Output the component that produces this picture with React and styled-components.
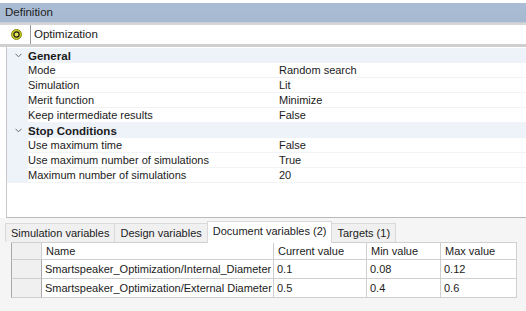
import React from 'react'
import styled, { createGlobalStyle } from 'styled-components'

const GlobalStyle = createGlobalStyle`
  html, body { margin: 0; padding: 0; background: #ffffff; }
  body { font-family: "Liberation Sans", Arial, sans-serif; font-size: 11px; color: #1b1b1b; }
`

const SECTIONS = [
  {
    title: 'General',
    props: [
      ['Mode', 'Random search'],
      ['Simulation', 'Lit'],
      ['Merit function', 'Minimize'],
      ['Keep intermediate results', 'False'],
    ],
  },
  {
    title: 'Stop Conditions',
    props: [
      ['Use maximum time', 'False'],
      ['Use maximum number of simulations', 'True'],
      ['Maximum number of simulations', '20'],
    ],
  },
]

const TABS = [
  { label: 'Simulation variables' },
  { label: 'Design variables' },
  { label: 'Document variables (2)', active: true },
  { label: 'Targets (1)' },
]

const COLUMNS = [
  { label: '', width: 31 },
  { label: 'Name', width: 232 },
  { label: 'Current value', width: 93 },
  { label: 'Min value', width: 74 },
  { label: 'Max value', width: 76 },
]

const VARIABLES = [
  ['Smartspeaker_Optimization/Internal_Diameter', '0.1', '0.08', '0.12'],
  ['Smartspeaker_Optimization/External Diameter', '0.5', '0.4', '0.6'],
]

export default function App() {
  return (
    <>
      <GlobalStyle />
      <Panel>
        <TitleBar>Definition</TitleBar>
        <NameRow>
          <TargetIcon />
          <NameInput>Optimization</NameInput>
        </NameRow>
        <PropertyGrid>
          {SECTIONS.map((section) => (
            <React.Fragment key={section.title}>
              <CategoryRow>
                <Gutter>
                  <Chevron />
                </Gutter>
                <CategoryTitle>{section.title}</CategoryTitle>
              </CategoryRow>
              {section.props.map(([name, value]) => (
                <PropRow key={name}>
                  <Gutter />
                  <PropName>{name}</PropName>
                  <PropValue>{value}</PropValue>
                </PropRow>
              ))}
            </React.Fragment>
          ))}
        </PropertyGrid>
        <BottomPanel>
          <TabStrip>
            {TABS.map((tab) => (
              <Tab key={tab.label} $active={tab.active}>{tab.label}</Tab>
            ))}
          </TabStrip>
          <Table>
            <HeaderRow>
              {COLUMNS.map((col, i) => (
                <HeaderCell key={i} $width={col.width} $corner={i === 0}>{col.label}</HeaderCell>
              ))}
            </HeaderRow>
            {VARIABLES.map((row) => (
              <DataRow key={row[0]}>
                <RowHeader $width={COLUMNS[0].width} />
                {row.map((cell, i) => (
                  <Cell key={i} $width={COLUMNS[i + 1].width}>{cell}</Cell>
                ))}
              </DataRow>
            ))}
          </Table>
        </BottomPanel>
      </Panel>
    </>
  )
}

function TargetIcon() {
  return (
    <IconBox>
      <svg width="11" height="11" viewBox="0 0 11 11">
        <circle cx="5.5" cy="5.5" r="5" fill="#c9c92a" stroke="#8a8a10" strokeWidth="1" />
        <circle cx="5.5" cy="5.5" r="2.6" fill="#e4e45a" stroke="#1a1a1a" strokeWidth="1.2" />
      </svg>
    </IconBox>
  )
}

function Chevron() {
  return (
    <svg width="7" height="5" viewBox="0 0 7 5">
      <path d="M0.5 0.8 L3.5 3.8 L6.5 0.8" fill="none" stroke="#666" strokeWidth="1" />
    </svg>
  )
}

const Panel = styled.div`
  width: 526px;
  height: 311px;
  display: flex;
  flex-direction: column;
  background: #ffffff;
  overflow: hidden;
`

const TitleBar = styled.div`
  margin-top: 3px;
  height: 19px;
  line-height: 19px;
  padding-left: 5px;
  font-size: 11.5px;
  color: #1e1e1e;
  background: linear-gradient(#aabdd4, #a6b9d0);
  border-bottom: 1px solid #c4cdd8;
`

const NameRow = styled.div`
  display: flex;
  align-items: center;
  height: 19px;
  border-top: 2px solid #d6d6d6;
  border-bottom: 3px solid #cfcfcf;
  background: #ffffff;
`

const IconBox = styled.div`
  width: 30px;
  display: flex;
  justify-content: center;
  padding-left: 2px;
  box-sizing: border-box;
`

const NameInput = styled.div`
  flex: 1;
  height: 19px;
  line-height: 19px;
  padding-left: 3px;
  font-size: 11.5px;
  border-left: 1px solid #9a9a9a;
`

const PropertyGrid = styled.div`
  margin-left: 6px;
  height: 169px;
  padding-top: 1px;
  border-left: 1px solid #c8c8c8;
  border-bottom: 1px solid #b9b9b9;
  background: #ffffff;
`

const RowBase = styled.div`
  display: flex;
  align-items: center;
  height: 15px;
`

const CategoryRow = styled(RowBase)`
  background: #eef3fa;
`

const PropRow = styled(RowBase)`
  border-bottom: 1px solid #f1f3f6;
  height: 14px;
`

const Gutter = styled.div`
  width: 19px;
  height: 100%;
  display: flex;
  align-items: center;
  justify-content: center;
  padding-left: 2px;
  background: #eef3fa;
`

const CategoryTitle = styled.div`
  font-weight: bold;
  font-size: 11.5px;
`

const PropName = styled.div`
  width: 251px;
  white-space: nowrap;
`

const PropValue = styled.div`
  flex: 1;
`

const BottomPanel = styled.div`
  flex: 1;
  background: #f5f5f5;
  padding-top: 4px;
`

const TabStrip = styled.div`
  display: flex;
  align-items: flex-end;
  height: 20px;
  padding-left: 6px;
`

const Tab = styled.div`
  height: ${(p) => (p.$active ? '21px' : '18px')};
  line-height: ${(p) => (p.$active ? '19px' : '18px')};
  padding: 0 5px;
  font-size: 11px;
  background: ${(p) => (p.$active ? '#ffffff' : '#f0f0f0')};
  border: 1px solid #d9d9d9;
  border-bottom: none;
  margin-left: -1px;
  margin-bottom: ${(p) => (p.$active ? '-1px' : '0')};
  position: relative;
  z-index: ${(p) => (p.$active ? 1 : 0)};
`

const Table = styled.div`
  margin-left: 11px;
  width: 506px;
  border-top: 1px solid #d0d0d0;
`

const HeaderRow = styled.div`
  display: flex;
  height: 17px;
`

const HeaderCell = styled.div`
  width: ${(p) => p.$width}px;
  box-sizing: border-box;
  padding-left: 4px;
  line-height: 17px;
  background: ${(p) => (p.$corner ? '#f0f0f0' : '#ffffff')};
  border-right: 1px solid #cfcfcf;
  border-bottom: 1px solid #cfcfcf;
  &:first-child { border-left: 1px solid #a9a9a9; }
`

const DataRow = styled.div`
  display: flex;
  height: 19px;
`

const RowHeader = styled.div`
  width: ${(p) => p.$width}px;
  box-sizing: border-box;
  background: #f0f0f0;
  border-left: 1px solid #a9a9a9;
  border-right: 1px solid #a9a9a9;
  border-bottom: 1px solid #cfcfcf;
`

const Cell = styled.div`
  width: ${(p) => p.$width}px;
  box-sizing: border-box;
  padding-left: 3px;
  line-height: 18px;
  white-space: nowrap;
  overflow: hidden;
  background: #ffffff;
  border-right: 1px solid #cfcfcf;
  border-bottom: 1px solid #cfcfcf;
`
